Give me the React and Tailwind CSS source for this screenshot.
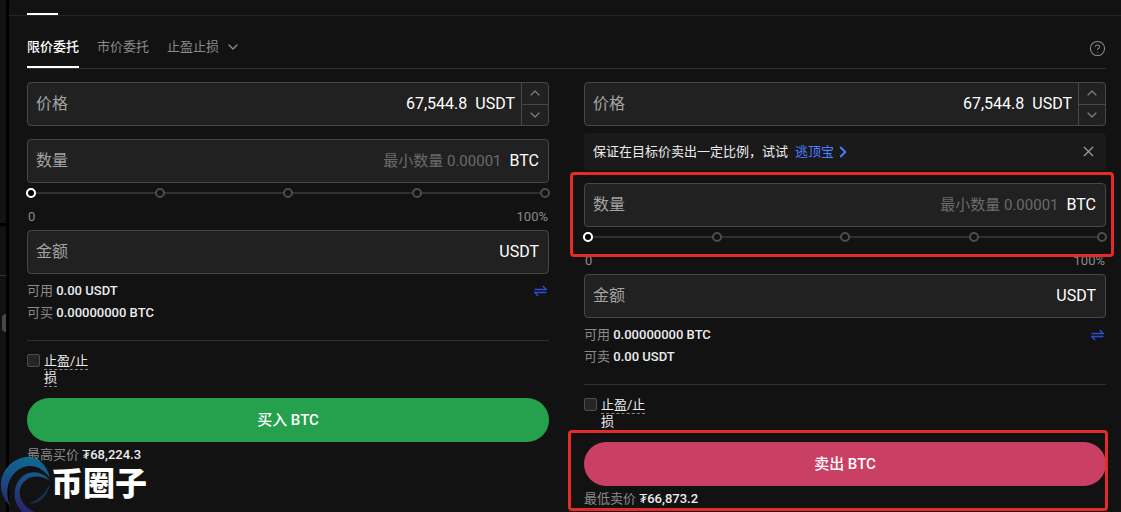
import React, { useState } from 'react';
import { ChevronDown, ChevronRight, ChevronUp, CircleHelp, X } from 'lucide-react';

const TABS = ['限价委托', '市价委托'];
const STEPS = [0, 25, 50, 75, 100];

function Field({ id, label, value, placeholder, unit, stepper }) {
    return (
        <div className="flex h-11 overflow-hidden rounded border border-[#474747] bg-[#212121]">
            <div className={`flex min-w-0 flex-1 items-center gap-2 pl-2 ${stepper ? 'pr-[6px]' : 'pr-[9px]'}`}>
                <label htmlFor={id} className="shrink-0 text-base text-[#a3a3a3]">{label}</label>
                <input
                    id={id}
                    type="text"
                    defaultValue={value}
                    placeholder={placeholder}
                    className="min-w-0 flex-1 bg-transparent text-right text-base text-white outline-none placeholder:text-[15px] placeholder:text-[#6b6b6b]"
                />
                <span className="text-base text-white">{unit}</span>
            </div>
            {stepper && (
                <div className="flex w-[27px] flex-col border-l border-[#474747] text-[#7d7d7d]">
                    <button type="button" aria-label="+" className="flex flex-1 items-center justify-center border-b border-[#474747]">
                        <ChevronUp size={16} strokeWidth={1.8} />
                    </button>
                    <button type="button" aria-label="-" className="flex flex-1 items-center justify-center">
                        <ChevronDown size={16} strokeWidth={1.8} />
                    </button>
                </div>
            )}
        </div>
    );
}

function PercentSlider({ label }) {
    const [percent, setPercent] = useState(0);

    return (
        <div className="relative -mx-px flex h-5 items-center">
            <div className="h-[2px] flex-1 bg-[#303030]" />
            <div className="absolute inset-0 flex items-center justify-between">
                {STEPS.map(step => (
                    <span key={step} className="size-[10px] rounded-full border-2 border-[#4d4d4d] bg-[#121212]" />
                ))}
            </div>
            <input
                type="range"
                min="0"
                max="100"
                value={percent}
                aria-label={label}
                onChange={e => setPercent(Number(e.target.value))}
                className="absolute inset-0 w-full appearance-none bg-transparent [&::-webkit-slider-thumb]:size-[10px] [&::-webkit-slider-thumb]:appearance-none [&::-webkit-slider-thumb]:rounded-full [&::-webkit-slider-thumb]:border-2 [&::-webkit-slider-thumb]:border-white [&::-webkit-slider-thumb]:bg-black"
            />
        </div>
    );
}

function SwapIcon() {
    return (
        <svg width="13" height="12" viewBox="0 0 13 12" fill="none" stroke="#2a4fd6" strokeWidth="1.4">
            <path d="M0.5 4.5H12.3L8.8 1" />
            <path d="M12.5 7.5H0.7L4.2 11" />
        </svg>
    );
}

function OrderForm({ side, balance, balanceUnit, max, maxUnit, limitLabel, limitPrice, marked, notice }) {
    const isBuy = side === 'buy';

    return (
        <form className="flex min-w-0 flex-1 flex-col" onSubmit={e => e.preventDefault()}>
            <Field id={`${side}-price`} label="价格" value="67,544.8" unit="USDT" stepper />
            {notice}
            <div className="relative mt-[13px]">
                <Field id={`${side}-amount`} label="数量" placeholder="最小数量 0.00001" unit="BTC" />
                <PercentSlider label="数量 %" />
                {marked && (
                    <div className="pointer-events-none absolute -top-[11px] -right-2 -bottom-[10px] -left-[14px] z-10 rounded border-3 border-[#e42c24]" />
                )}
            </div>
            <div className="flex h-[27px] items-end justify-between px-px pb-[3px] text-[13px] leading-5 text-[#8a8a8a]">
                <span>0</span>
                <span>100%</span>
            </div>
            <Field id={`${side}-total`} label="金额" unit="USDT" />

            <div className="mt-[6px] text-[13px] leading-[22px] text-[#8a8a8a]">
                <div className="flex items-center justify-between">
                    <span>可用 <span className="font-medium text-[#ededed]">{balance} {balanceUnit}</span></span>
                    <button type="button" aria-label="划转" className="pr-[2px]"><SwapIcon /></button>
                </div>
                <div>{isBuy ? '可买' : '可卖'} <span className="font-medium text-[#ededed]">{max} {maxUnit}</span></div>
            </div>

            <div className="mt-4 flex items-start gap-1 border-t border-[#303030] pt-[11px]">
                <input
                    id={`${side}-tpsl`}
                    type="checkbox"
                    className="mt-[2px] size-[13px] appearance-none rounded-xs border border-[#4d4d4d] bg-[#262626] checked:bg-white"
                />
                <label
                    htmlFor={`${side}-tpsl`}
                    className="w-[50px] text-[13px] leading-[17px] text-[#ededed] underline decoration-[#8a8a8a] decoration-dashed decoration-1 underline-offset-4"
                >
                    止盈/止损
                </label>
            </div>

            <div className="relative mt-3">
                <button
                    type="submit"
                    className={`h-11 w-full rounded-full text-[15px] font-medium text-white ${isBuy ? 'bg-[#25a14d]' : 'bg-[#ca3f64]'}`}
                >
                    {isBuy ? '买入 BTC' : '卖出 BTC'}
                </button>
                <div className="pt-px text-[13px] leading-6 text-[#8a8a8a]">
                    {limitLabel} <span className="font-medium text-[#ededed]">₮{limitPrice}</span>
                </div>
                {marked && (
                    <div className="pointer-events-none absolute -top-3 -right-[2px] bottom-0 -left-4 z-10 rounded border-3 border-[#e42c24]" />
                )}
            </div>
        </form>
    );
}

function Watermark() {
    return (
        <div className="pointer-events-none absolute bottom-0 left-0 flex h-14 items-center">
            <svg width="51" height="56" viewBox="0 0 51 56" fill="none">
                <defs>
                    <linearGradient id="swirl" x1="30" y1="0" x2="20" y2="56" gradientUnits="userSpaceOnUse">
                        <stop offset="0" stopColor="#0b6c96" />
                        <stop offset="0.5" stopColor="#1b4a80" />
                        <stop offset="1" stopColor="#2a2268" />
                    </linearGradient>
                </defs>
                <path d="M50 22C47 8 37 0 26 1C11 3 0 16 1 31C2 39 5 45 10 50C5 36 7 22 18 14C30 6 42 11 50 22Z" fill="url(#swirl)" />
                <path d="M50 25C43 15 31 14 23 20C12 29 12 46 22 56H35C22 51 17 39 21 30C27 19 40 18 50 25Z" fill="url(#swirl)" />
                <path d="M50 27C48 40 41 47 29 48C40 43 46 37 50 27Z" fill="#1d2f58" />
            </svg>
            <span className="text-[32px] leading-none font-black text-white">币圈子</span>
        </div>
    );
}

export default function App() {
    const [tab, setTab] = useState(TABS[0]);

    const notice = (
        <div className="mt-[7px] flex h-[37px] items-center justify-between rounded bg-[#1a1a1a] pr-[9px] pl-[9px] text-[13px] text-[#ededed]">
            <p className="flex items-center gap-[7px]">
                保证在目标价卖出一定比例，试试
                <a href="#" className="flex items-center text-[#4a7dff]">
                    逃顶宝
                    <ChevronRight size={18} strokeWidth={2.5} />
                </a>
            </p>
            <button type="button" aria-label="关闭" className="text-[#a3a3a3]">
                <X size={17} strokeWidth={1.6} />
            </button>
        </div>
    );

    return (
        <div className="relative flex min-h-screen overflow-hidden bg-black font-['Roboto','Noto_Sans_CJK_SC',sans-serif]">
            <aside className="flex w-[6px] flex-col gap-[3px]">
                <div className="h-[223px] bg-[#121212]" />
                <div className="flex-1 bg-[#121212]">
                    <div className="h-[50px] border-b border-[#303030]" />
                    <div className="mt-[38px] ml-[2px] h-[18px] rounded-l bg-[#474747]" />
                </div>
            </aside>

            <main className="ml-[3px] min-w-0 flex-1 bg-[#121212]">
                <div className="flex h-4 items-end border-b border-[#262626] pl-[18px]">
                    <div className="h-[2px] w-[31px] bg-white" />
                </div>
                <div className="pr-[15px] pl-[18px]">
                    <nav className="flex h-[53px] items-stretch gap-[18px] border-b border-[#303030] text-[13px]">
                        {TABS.map(name => (
                            <button
                                key={name}
                                type="button"
                                onClick={() => setTab(name)}
                                className={`border-b-2 pt-3 ${tab === name ? 'border-white font-medium text-white' : 'border-transparent text-[#8a8a8a]'}`}
                            >
                                {name}
                            </button>
                        ))}
                        <button type="button" aria-haspopup="menu" className="flex items-center gap-[6px] border-b-2 border-transparent pt-3 text-[#8a8a8a]">
                            止盈止损
                            <ChevronDown size={16} strokeWidth={2} />
                        </button>
                        <button type="button" aria-label="帮助" className="ml-auto pt-3 text-[#8a8a8a]">
                            <CircleHelp size={17} strokeWidth={1.5} />
                        </button>
                    </nav>

                    <div className="flex gap-[35px] pt-[13px]">
                        <OrderForm
                            side="buy"
                            balance="0.00"
                            balanceUnit="USDT"
                            max="0.00000000"
                            maxUnit="BTC"
                            limitLabel="最高买价"
                            limitPrice="68,224.3"
                        />
                        <OrderForm
                            side="sell"
                            balance="0.00000000"
                            balanceUnit="BTC"
                            max="0.00"
                            maxUnit="USDT"
                            limitLabel="最低卖价"
                            limitPrice="66,873.2"
                            notice={notice}
                            marked
                        />
                    </div>
                </div>
            </main>
            <Watermark />
        </div>
    );
}
